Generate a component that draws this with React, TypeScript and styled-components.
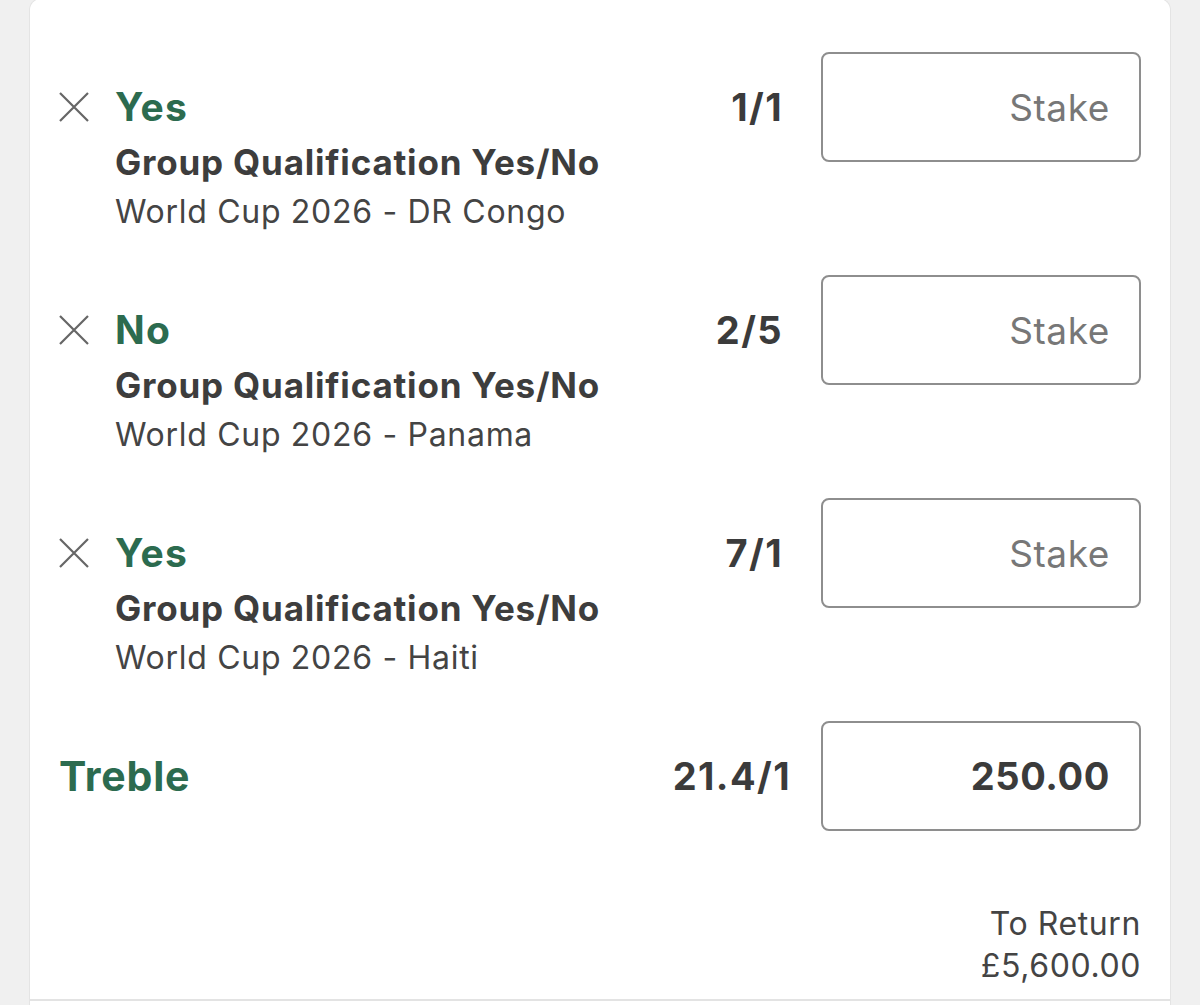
import React from "react";
import styled, { createGlobalStyle } from "styled-components";

const GlobalStyle = createGlobalStyle`
    html, body {
        margin: 0;
        padding: 0;
        background: #f0f0f0;
    }

    body {
        font-family: Inter, "Noto Sans", "Liberation Sans", sans-serif;
        color: #3b3b3b;
        -webkit-font-smoothing: antialiased;
    }
`;

type Leg = {
    id: number;
    pick: string;
    market: string;
    event: string;
    odds: string;
};

const legs: Leg[] = [
    { id: 1, pick: "Yes", market: "Group Qualification Yes/No", event: "World Cup 2026 - DR Congo", odds: "1/1" },
    { id: 2, pick: "No", market: "Group Qualification Yes/No", event: "World Cup 2026 - Panama", odds: "2/5" },
    { id: 3, pick: "Yes", market: "Group Qualification Yes/No", event: "World Cup 2026 - Haiti", odds: "7/1" },
];

const CloseIcon: React.FC = () => (
    <svg width="30" height="30" viewBox="0 0 30 30" fill="none">
        <path d="M1 1 L29 29 M29 1 L1 29" stroke="#666" strokeWidth="2.2" />
    </svg>
);

const App: React.FC = () => {
    return (
        <>
            <GlobalStyle />
            <Page>
                <Card>
                    <Body>
                        <Legs>
                            {legs.map((leg) => (
                                <Selection key={leg.id}>
                                    <Info>
                                        <PickLine>
                                            <RemoveButton aria-label="Remove selection">
                                                <CloseIcon />
                                            </RemoveButton>
                                            <Pick>{leg.pick}</Pick>
                                        </PickLine>
                                        <Market>{leg.market}</Market>
                                        <Event>{leg.event}</Event>
                                    </Info>
                                    <Price>
                                        <Odds gap={38}>{leg.odds}</Odds>
                                        <StakeBox>
                                            <Placeholder>Stake</Placeholder>
                                        </StakeBox>
                                    </Price>
                                </Selection>
                            ))}
                        </Legs>

                        <MultipleRow>
                            <MultipleName>Treble</MultipleName>
                            <Price>
                                <Odds gap={30}>21.4/1</Odds>
                                <StakeBox>
                                    <StakeValue>250.00</StakeValue>
                                </StakeBox>
                            </Price>
                        </MultipleRow>

                        <Returns>
                            <span>To Return</span>
                            <span>£5,600.00</span>
                        </Returns>
                    </Body>
                    <Footer />
                </Card>
            </Page>
        </>
    );
};

const Page = styled.div`
    min-height: 1005px;
    padding: 0 30px;
    box-sizing: border-box;
    overflow: hidden;
`;

const Card = styled.div`
    background: #ffffff;
    border: 1px solid #e4e4e4;
    border-bottom: none;
    border-radius: 12px 12px 0 0;
    margin-top: -2px;
    margin-left: -1px;
    margin-right: -1px;
`;

const Body = styled.div`
    padding: 53px 29px 0 29px;
    border-bottom: 2px solid #e3e3e3;
`;

const Legs = styled.div`
    display: flex;
    flex-direction: column;
    gap: 38px;
`;

const Selection = styled.div`
    display: flex;
    align-items: flex-start;
`;

const Info = styled.div`
    flex: 1;
    display: flex;
    flex-direction: column;
    padding-top: 33px;
`;

const PickLine = styled.div`
    display: flex;
    align-items: center;
    gap: 26px;
    height: 44px;
`;

const RemoveButton = styled.button`
    display: flex;
    padding: 0;
    border: none;
    background: none;
    cursor: pointer;
`;

const Pick = styled.span`
    font-size: 39px;
    font-weight: 700;
    letter-spacing: 1.3px;
    color: #2c6b4f;
    line-height: 44px;
`;

const Market = styled.div`
    margin-top: 8px;
    padding-left: 56px;
    font-size: 35px;
    font-weight: 700;
    letter-spacing: 0.8px;
    line-height: 50px;
    color: #3d3d3d;
`;

const Event = styled.div`
    padding-left: 56px;
    font-size: 32px;
    font-weight: 400;
    letter-spacing: 0.7px;
    line-height: 50px;
    color: #444444;
`;

const Price = styled.div`
    display: flex;
    align-items: center;
    height: 110px;
`;

const Odds = styled.span<{ gap: number }>`
    margin-right: ${(p) => p.gap}px;
    font-size: 38px;
    font-weight: 700;
    letter-spacing: 1.4px;
    color: #3b3b3b;
`;

const StakeBox = styled.div`
    width: 320px;
    height: 110px;
    box-sizing: border-box;
    border: 2px solid #8e8e8e;
    border-radius: 8px;
    display: flex;
    align-items: center;
    justify-content: flex-end;
    padding-right: 29px;
`;

const Placeholder = styled.span`
    font-size: 37px;
    font-weight: 400;
    letter-spacing: 0.6px;
    color: #777777;
`;

const StakeValue = styled.span`
    font-size: 38px;
    font-weight: 700;
    letter-spacing: 0.6px;
    color: #3b3b3b;
`;

const MultipleRow = styled.div`
    display: flex;
    align-items: center;
    justify-content: space-between;
    margin-top: 38px;
`;

const MultipleName = styled.span`
    font-size: 41px;
    font-weight: 700;
    letter-spacing: 0.8px;
    color: #2c6b4f;
`;

const Returns = styled.div`
    display: flex;
    flex-direction: column;
    align-items: flex-end;
    margin-top: 72px;
    padding-bottom: 12px;
    font-size: 32px;
    letter-spacing: 0.6px;
    line-height: 42px;
    color: #444444;
`;

const Footer = styled.div`
    height: 40px;
`;

export default App;
